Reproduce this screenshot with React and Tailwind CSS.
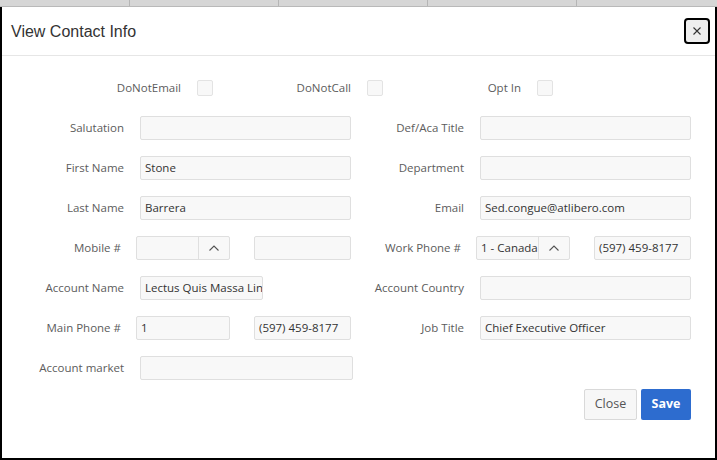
import React from 'react';

const font = { fontFamily: '"Open Sans", "Noto Sans", sans-serif' };

const Input = ({ value = '', className = 'w-[211px]' }) => (
  <div className={`flex h-6 items-center overflow-hidden whitespace-nowrap rounded-[2px] border border-[#dfdfdf] bg-[#f8f8f8] px-[4px] text-[11.5px] text-[#333] ${className}`}>
    {value}
  </div>
);

const Chevron = () => (
  <svg width="12" height="8" viewBox="0 0 12 8" fill="none">
    <path d="M1.5 6.5L6 2l4.5 4.5" stroke="#555" strokeWidth="1.1" />
  </svg>
);

const PhoneSelect = ({ value = '' }) => (
  <div className="flex h-6 w-[94px] overflow-hidden rounded-[2px] border border-[#dfdfdf] bg-[#f8f8f8] text-[11.5px] text-[#333]">
    <div className="flex flex-1 items-center overflow-hidden whitespace-nowrap px-[4px]">{value}</div>
    <div className="flex w-[31px] items-center justify-center border-l border-[#dfdfdf]">
      <Chevron />
    </div>
  </div>
);

const Phone = ({ code, number }) => (
  <div className="flex w-[215px] gap-6">
    <PhoneSelect value={code} />
    <Input value={number} className="w-[97px]" />
  </div>
);

const Label = ({ children }) => (
  <div className="flex-1 whitespace-nowrap text-right text-[11.5px] text-[#5c5c5c]">{children}</div>
);

const Half = ({ label, children, phone, width }) => (
  <div className={`flex items-center ${width}`}>
    <Label>{label}</Label>
    <div className={phone ? 'ml-[15px]' : 'ml-4 w-[211px]'}>{children}</div>
  </div>
);

const Row = ({ left, right }) => (
  <div className="flex h-6 items-center">
    <Half width="w-[349px]" {...left} />
    {right && <Half width="w-[340px]" {...right} />}
  </div>
);

const Check = ({ label, width }) => (
  <div className="flex items-center">
    <div className={`text-right text-[11.5px] text-[#5c5c5c] ${width}`}>{label}</div>
    <div className="ml-4 h-4 w-4 rounded-[2px] border border-[#e3e3e3] bg-[#f8f8f8]" />
  </div>
);

export default function App() {
  return (
    <div className="h-[460px] w-[717px] overflow-hidden bg-white" style={font}>
      <div className="flex h-[7px] border-b border-[#b9b9b9] bg-[#d6d6d6]">
        <div className="w-[130px] border-r border-[#b5b5b5]" />
        <div className="w-[149px] border-r border-[#b5b5b5]" />
        <div className="w-[149px] border-r border-[#b5b5b5]" />
        <div className="w-[149px] border-r border-[#b5b5b5]" />
      </div>
      <div className="flex h-[453px] flex-col border-x-2 border-b-2 border-black">
        <div className="flex h-[49px] items-center justify-between border-b border-[#e6e6e6] pl-[9px] pr-[5px]">
          <h1 className="pt-[2px] text-[16px] text-[#333]" style={{ fontFamily: '"Liberation Sans", Arial, sans-serif' }}>
            View Contact Info
          </h1>
          <button className="flex h-[26px] w-[26px] items-center justify-center rounded-[4px] border-2 border-black bg-[#eeeeee]">
            <svg width="10" height="10" viewBox="0 0 10 10">
              <path d="M1.5 1.5l7 7M8.5 1.5l-7 7" stroke="#333" strokeWidth="1.1" />
            </svg>
          </button>
        </div>

        <div className="flex flex-col gap-4 pt-5">
          <div className="flex h-6 items-center">
            <Check label="DoNotEmail" width="w-[179px]" />
            <Check label="DoNotCall" width="w-[138px]" />
            <Check label="Opt In" width="w-[138px]" />
          </div>
          <Row left={{ label: 'Salutation', children: <Input /> }} right={{ label: 'Def/Aca Title', children: <Input /> }} />
          <Row left={{ label: 'First Name', children: <Input value="Stone" /> }} right={{ label: 'Department', children: <Input /> }} />
          <Row left={{ label: 'Last Name', children: <Input value="Barrera" /> }} right={{ label: 'Email', children: <Input value="Sed.congue@atlibero.com" /> }} />
          <Row
            left={{ label: 'Mobile #', phone: true, children: <Phone code="" number="" /> }}
            right={{ label: 'Work Phone #', phone: true, children: <Phone code="1 - Canada" number="(597) 459-8177" /> }}
          />
          <Row
            left={{ label: 'Account Name', children: <Input value="Lectus Quis Massa Lin" className="w-[123px]" /> }}
            right={{ label: 'Account Country', children: <Input /> }}
          />
          <Row
            left={{
              label: 'Main Phone #',
              phone: true,
              children: (
                <div className="flex w-[215px] gap-6">
                  <Input value="1" className="w-[94px]" />
                  <Input value="(597) 459-8177" className="w-[97px]" />
                </div>
              ),
            }}
            right={{ label: 'Job Title', children: <Input value="Chief Executive Officer" /> }}
          />
          <Row left={{ label: 'Account market', children: <Input className="w-[213px]" /> }} />
        </div>

        <div className="mt-[9px] flex justify-end gap-1 pr-6">
          <button className="h-[31px] w-[53px] rounded-[2px] border border-[#d9d9d9] bg-[#f7f7f7] text-[12.5px] text-[#555]">
            Close
          </button>
          <button className="h-[31px] w-[50px] rounded-[2px] bg-[#2d6ccf] text-[12.5px] font-bold text-white">
            Save
          </button>
        </div>
      </div>
    </div>
  );
}
